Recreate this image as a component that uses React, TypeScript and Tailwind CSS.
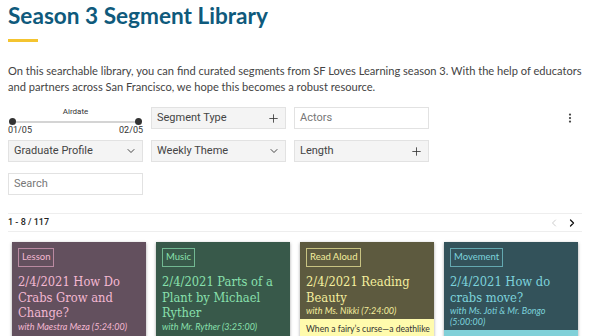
import React from 'react';
import { Plus, ChevronDown, ChevronLeft, ChevronRight, MoreVertical } from 'lucide-react';

interface Segment {
  tag: string;
  title: string;
  host: string;
  bg: string;
  fg: string;
  border: string;
  foot?: string;
  footBg?: string;
}

const segments: Segment[] = [
  { tag: 'Lesson', title: '2/4/2021 How Do Crabs Grow and Change?', host: 'with Maestra Meza (5:24:00)', bg: 'bg-[#63505e]', fg: 'text-[#f3b8d2]', border: 'border-[#b98aa1]' },
  { tag: 'Music', title: '2/4/2021 Parts of a Plant by Michael Ryther', host: 'with Mr. Ryther (3:25:00)', bg: 'bg-[#38594a]', fg: 'text-[#88e0ad]', border: 'border-[#72b892]' },
  { tag: 'Read Aloud', title: '2/4/2021 Reading Beauty', host: 'with Ms. Nikki (7:24:00)', bg: 'bg-[#5d5a3f]', fg: 'text-[#f4ee9e]', border: 'border-[#c8c382]', foot: 'When a fairy’s curse—a deathlike', footBg: 'bg-[#fffbad]' },
  { tag: 'Movement', title: '2/4/2021 How do crabs move?', host: 'with Ms. Joti & Mr. Bongo (5:00:00)', bg: 'bg-[#33525a]', fg: 'text-[#7dd2dc]', border: 'border-[#64a8b0]', foot: ' ', footBg: 'bg-[#80d0d8]' },
];

const FilterBox = ({ label, icon }: { label: string; icon: 'plus' | 'down' }) => (
  <div className="h-[22px] flex items-center justify-between px-[5px] bg-[#f4f4f4] border border-[#e2e2e2] text-[11px] text-[#444]">
    <span>{label}</span>
    {icon === 'plus' ? (
      <Plus className="w-[13px] h-[13px] text-[#333]" strokeWidth={1.5} />
    ) : (
      <ChevronDown className="w-[12px] h-[12px] text-[#333]" strokeWidth={1.8} />
    )}
  </div>
);

const TextBox = ({ placeholder }: { placeholder: string }) => (
  <div className="h-[22px] flex items-center px-[5px] bg-white border border-[#e2e2e2] text-[11px] text-[#777]">
    {placeholder}
  </div>
);

export default function App() {
  return (
    <div className="w-[590px] h-[336px] overflow-hidden bg-white px-2 font-['Lato',sans-serif]">
      <h1 className="pt-[3px] text-[22.6px] leading-[26px] font-bold text-[#0f5a7c]">Season 3 Segment Library</h1>
      <div className="mt-[10px] w-[30px] h-[3px] bg-[#f4c430]" />

      <p className="mt-[21px] text-[11.1px] leading-[16px] text-[#444]">
        On this searchable library, you can find curated segments from SF Loves Learning season 3. With the help of educators and partners across San Francisco, we hope this becomes a robust resource.
      </p>

      {/* Filters */}
      <div className="mt-[12px] grid grid-cols-[135px_135px_135px_1fr] gap-x-2 gap-y-[11px] font-['Roboto',sans-serif]">
        <div className="relative h-[22px]">
          <div className="text-center text-[8px] leading-[10px] text-[#333]">Airdate</div>
          <div className="mx-[4px] mt-[1px] relative h-[7px] flex items-center">
            <div className="w-full h-[2px] bg-[#d4d4d4]" />
            <div className="absolute left-[-3px] w-[7px] h-[7px] rounded-full bg-[#333]" />
            <div className="absolute right-[-3px] w-[7px] h-[7px] rounded-full bg-[#333]" />
          </div>
          <div className="flex justify-between text-[9px] leading-[10px] text-[#333]">
            <span>01/05</span>
            <span>02/05</span>
          </div>
        </div>
        <FilterBox label="Segment Type" icon="plus" />
        <TextBox placeholder="Actors" />
        <div className="flex items-center justify-end pr-[6px]">
          <MoreVertical className="w-[12px] h-[12px] text-[#444]" strokeWidth={2.5} />
        </div>

        <FilterBox label="Graduate Profile" icon="down" />
        <FilterBox label="Weekly Theme" icon="down" />
        <FilterBox label="Length" icon="plus" />
        <div />

        <TextBox placeholder="Search" />
      </div>

      {/* Pagination */}
      <div className="mt-[18px] h-[19px] flex items-center justify-between border-y border-[#eeeeee] text-[9px] font-medium text-[#222] font-['Roboto',sans-serif]">
        <span>1 - 8 / 117</span>
        <div className="flex items-center gap-[6px] pr-[4px]">
          <ChevronLeft className="w-[12px] h-[12px] text-[#bbb]" strokeWidth={1.5} />
          <ChevronRight className="w-[12px] h-[12px] text-[#111]" strokeWidth={2.5} />
        </div>
      </div>

      {/* Cards */}
      <div className="mt-[10px] px-[4px] grid grid-cols-4 gap-[10px] w-[574px]">
        {segments.map(s => (
          <div key={s.title} className={`${s.bg} h-[140px] shadow-[0_1px_3px_rgba(0,0,0,0.35)] flex flex-col`}>
            <div className="px-[6px] pt-[6px] pb-[3px]">
              <div className="flex">
                <span className={`h-[19px] flex items-center border ${s.border} ${s.fg} px-[3px] text-[9.5px]`}>{s.tag}</span>
              </div>
              <div className={`mt-[7px] ${s.fg} font-['DejaVu_Serif_Condensed','DejaVu_Serif',serif] text-[12.8px] leading-[15.5px]`}>{s.title}</div>
              <div className={`${s.fg} italic text-[9px] leading-[11px]`}>{s.host}</div>
            </div>
            {s.foot && (
              <div className={`${s.footBg} flex-1 px-[6px] pt-[4px] text-[8.6px] leading-[13px] text-[#333] whitespace-nowrap overflow-hidden`}>{s.foot}</div>
            )}
          </div>
        ))}
      </div>
    </div>
  );
}
